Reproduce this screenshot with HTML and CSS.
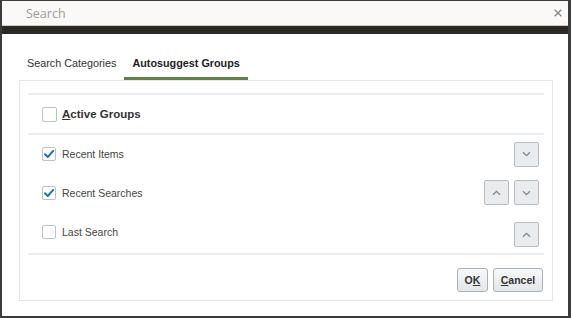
FILE: index.html
```html
<!DOCTYPE html>
<html lang="en">
<head>
<meta charset="utf-8">
<title>Search</title>
<link rel="stylesheet" href="styles.css">
</head>
<body>
<div class="dialog">
  <div class="titlebar">
    <span class="title">Search</span>
    <svg class="close" width="8" height="8" viewBox="0 0 8 8"><path d="M0.7 0.7L7.3 7.3M7.3 0.7L0.7 7.3" stroke="#8a8a8a" stroke-width="1.4" fill="none"/></svg>
  </div>
  <div class="band"></div>
  <div class="content">
    <div class="tabs">
      <div class="tab">Search Categories</div>
      <div class="tab active">Autosuggest Groups</div>
    </div>
    <div class="panel">
      <div class="list">
        <div class="row header">
          <span class="check big"></span>
          <span class="label-bold"><u>A</u>ctive Groups</span>
        </div>
        <div class="row r1">
          <span class="check on"><svg width="12" height="12" viewBox="0 0 12 12"><path d="M2 6.3L4.8 9L10.2 2.8" stroke="#1f6fc5" stroke-width="2" fill="none" stroke-linecap="round" stroke-linejoin="round"/></svg></span>
          <span class="label">Recent Items</span>
          <div class="moves">
            <span class="move"><svg width="9" height="6" viewBox="0 0 9 6"><path d="M1 1.2L4.5 4.6L8 1.2" stroke="#80878f" stroke-width="1.3" fill="none"/></svg></span>
          </div>
        </div>
        <div class="row r2">
          <span class="check on"><svg width="12" height="12" viewBox="0 0 12 12"><path d="M2 6.3L4.8 9L10.2 2.8" stroke="#1f6fc5" stroke-width="2" fill="none" stroke-linecap="round" stroke-linejoin="round"/></svg></span>
          <span class="label">Recent Searches</span>
          <div class="moves">
            <span class="move"><svg width="9" height="6" viewBox="0 0 9 6"><path d="M1 4.8L4.5 1.4L8 4.8" stroke="#80878f" stroke-width="1.3" fill="none"/></svg></span>
            <span class="move"><svg width="9" height="6" viewBox="0 0 9 6"><path d="M1 1.2L4.5 4.6L8 1.2" stroke="#80878f" stroke-width="1.3" fill="none"/></svg></span>
          </div>
        </div>
        <div class="row r3">
          <span class="check"></span>
          <span class="label">Last Search</span>
          <div class="moves low">
            <span class="move"><svg width="9" height="6" viewBox="0 0 9 6"><path d="M1 4.8L4.5 1.4L8 4.8" stroke="#80878f" stroke-width="1.3" fill="none"/></svg></span>
          </div>
        </div>
      </div>
      <div class="footer">
        <button class="btn ok">O<u>K</u></button>
        <button class="btn cancel"><u>C</u>ancel</button>
      </div>
    </div>
  </div>
</div>
</body>
</html>
```

FILE: styles.css
```css
* { box-sizing: border-box; }
html, body { margin: 0; padding: 0; background: #ffffff; }
body { font-family: "Liberation Sans", Arial, sans-serif; color: #333; }

.dialog {
  width: 571px;
  height: 318px;
  border-style: solid;
  border-color: #3b3b3b;
  border-width: 1px 3px 2px 2px;
  background: #ffffff;
  display: flex;
  flex-direction: column;
}

.titlebar {
  height: 25px;
  background: #fbf9f7;
  border-bottom: 1px solid #cfcdca;
  display: flex;
  align-items: center;
  justify-content: space-between;
  padding: 0 6px 0 24px;
}
.title {
  font-family: "Open Sans", "Noto Sans", sans-serif;
  font-size: 12.5px;
  color: #9b9b9b;
  line-height: 16px;
  padding-top: 1px;
}
.close { display: block; margin-top: -1px; }

.band { height: 8px; background: #2c2824; }

.content { flex: 1; display: flex; flex-direction: column; }

.tabs {
  display: flex;
  padding: 18px 0 0 17px;
}
.tab {
  font-size: 10.8px;
  line-height: 22px;
  color: #333;
  padding: 0 8px 3px;
  border-bottom: 3px solid transparent;
}
.tab.active {
  font-weight: bold;
  font-size: 10.8px;
  color: #222;
  border-bottom-color: #62804a;
}

.panel {
  margin: 0 15px 0 17px;
  height: 221px;
  border: 1px solid #e2e6ea;
  padding: 12px 8px 8px;
  display: flex;
  flex-direction: column;
}

.list { border-top: 2px solid #e9edf1; border-bottom: 2px solid #e9edf1; }

.row {
  display: flex;
  align-items: center;
  padding: 0 5px 0 14px;
}
.row.header { height: 40px; border-bottom: 2px solid #e9edf1; }
.row.r1 { height: 38px; }
.row.r2 { height: 39px; }
.row.r3 { height: 41px; padding-bottom: 2px; }

.check {
  width: 14px;
  height: 14px;
  border: 1px solid #bcc2c8;
  border-radius: 2px;
  background: #fff;
  margin-right: 6px;
  display: flex;
  align-items: center;
  justify-content: center;
  flex: none;
}
.check.big { width: 15px; height: 15px; margin-right: 5px; }

.label { font-size: 10.5px; color: #444; }
.label-bold { font-size: 11.5px; font-weight: bold; color: #333; }

.moves { margin-left: auto; display: flex; gap: 5px; }
.moves.low { margin-top: 6px; }
.move {
  width: 25px;
  height: 25px;
  border: 1px solid #b6bdc4;
  border-radius: 2px;
  background: #e8ecef;
  display: flex;
  align-items: center;
  justify-content: center;
}
.move svg { display: block; }

.footer {
  margin-top: auto;
  display: flex;
  justify-content: flex-end;
  gap: 5px;
  padding-right: 1px;
}
.btn {
  height: 24px;
  border: 1px solid #a8b0b8;
  border-radius: 3px;
  background: linear-gradient(#f7f8f9, #e3e7ea);
  font-family: "Liberation Sans", Arial, sans-serif;
  font-weight: bold;
  font-size: 10.5px;
  color: #333;
  padding: 0;
}
.btn.ok { width: 31px; }
.btn.cancel { width: 50px; }
```
